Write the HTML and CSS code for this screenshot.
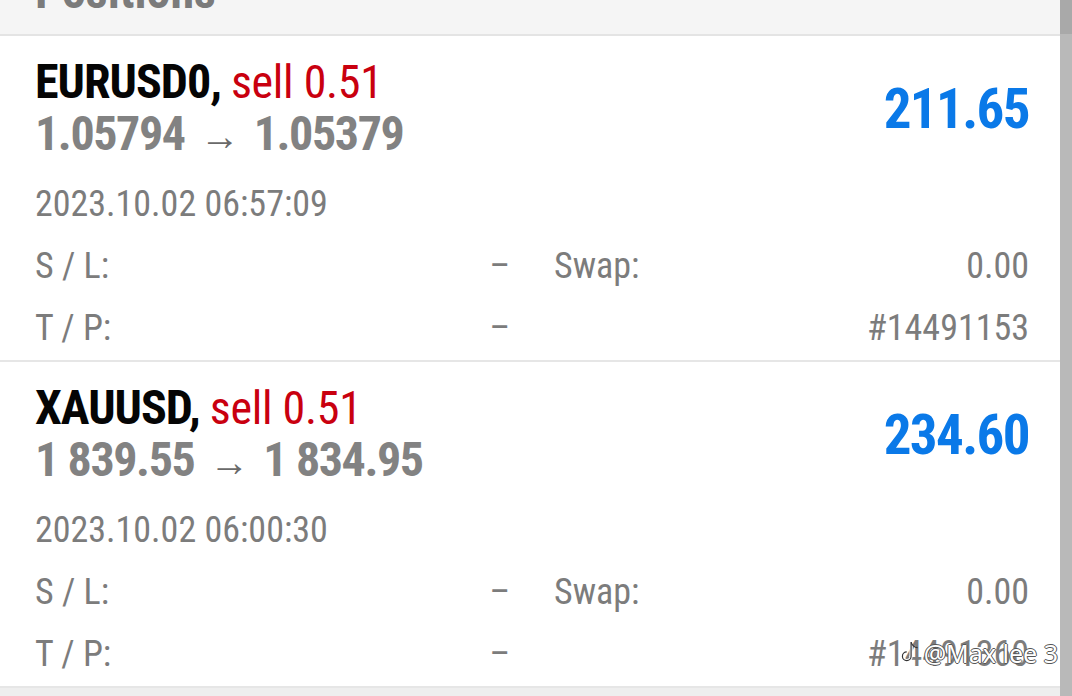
FILE: index.html
```html
<!DOCTYPE html>
<html lang="en">
<head>
<meta charset="utf-8">
<title>Positions</title>
<link rel="stylesheet" href="styles.css">
</head>
<body>
<div class="app">
  <main class="list">
    <header class="title-bar"><span class="title">Positions</span></header>

    <section class="pos">
      <div class="pos-top">
        <div class="pos-main">
          <div class="line symbol"><b>EURUSD0,</b><span class="sell">sell 0.51</span></div>
          <div class="line prices">1.05794<span class="arrow">→</span>1.05379</div>
        </div>
        <div class="profit">211.65</div>
      </div>
      <div class="date">2023.10.02 06:57:09</div>
      <div class="details">
        <div class="cell"><span>S / L:</span><span>–</span></div>
        <div class="cell"><span>Swap:</span><span>0.00</span></div>
        <div class="cell"><span>T / P:</span><span>–</span></div>
        <div class="cell"><span></span><span>#14491153</span></div>
      </div>
    </section>

    <section class="pos">
      <div class="pos-top">
        <div class="pos-main">
          <div class="line symbol"><b>XAUUSD,</b><span class="sell">sell 0.51</span></div>
          <div class="line prices">1 839.55<span class="arrow">→</span>1 834.95</div>
        </div>
        <div class="profit">234.60</div>
      </div>
      <div class="date">2023.10.02 06:00:30</div>
      <div class="details">
        <div class="cell"><span>S / L:</span><span>–</span></div>
        <div class="cell"><span>Swap:</span><span>0.00</span></div>
        <div class="cell"><span>T / P:</span><span>–</span></div>
        <div class="cell ticket"><span></span><span>#14491360</span>
          <div class="watermark">
            <svg class="wm-icon" viewBox="0 0 20 24" width="22" height="26"><path d="M11 2v13a4 4 0 1 1-4-4" fill="none" stroke="#fff" stroke-width="3"/><path d="M11 2v13a4 4 0 1 1-4-4" fill="none" stroke="#333" stroke-width="1.1"/><path d="M11 2c1 3 3 5 6 5" fill="none" stroke="#333" stroke-width="1.1"/></svg>
            <span>@Max lee 3</span>
          </div>
        </div>
      </div>
    </section>
    <div class="rest"></div>
  </main>
  <aside class="scrollbar"><div class="thumb-top"></div></aside>
</div>
</body>
</html>
```

FILE: styles.css
```css
html, body {
  margin: 0;
  padding: 0;
  background: #ffffff;
}

body {
  font-family: "Roboto Condensed", Roboto, "Liberation Sans", sans-serif;
  font-stretch: 87.5%;
  width: 1072px;
  height: 696px;
  overflow: hidden;
}

.app {
  display: flex;
  height: 696px;
}

.list {
  flex: 1;
  display: flex;
  flex-direction: column;
  min-width: 0;
}

.title-bar {
  height: 36px;
  flex: none;
  background: #f5f5f5;
  border-bottom: 2px solid #e4e4e4;
  display: flex;
  align-items: flex-end;
  padding: 0 0 18px 35px;
  box-sizing: border-box;
  overflow: hidden;
}

.title {
  font-size: 48px;
  line-height: 48px;
  font-weight: 700;
  color: #7b7b7b;
}

.pos {
  flex: none;
  height: 326px;
  box-sizing: border-box;
  padding: 20px 31px 0 35px;
  border-bottom: 2px solid #e6e6e6;
}

.pos-top {
  display: flex;
  align-items: center;
  justify-content: space-between;
}

.line {
  font-size: 48px;
  line-height: 52px;
  white-space: nowrap;
}

.symbol b {
  font-weight: 700;
  color: #050505;
  letter-spacing: -1px;
}

.sell {
  color: #c9000f;
  font-weight: 400;
  font-size: 46px;
  margin-left: 10px;
  letter-spacing: -0.3px;
}

.prices {
  color: #828282;
  font-weight: 700;
  letter-spacing: -1.4px;
}

.arrow {
  font-weight: 400;
  font-size: 40px;
  color: #6a6a6a;
  margin: 0 14px 0 15px;
  letter-spacing: 0;
}

.profit {
  font-size: 55px;
  line-height: 60px;
  font-weight: 700;
  color: #0a79e8;
  letter-spacing: -1.6px;
  margin-top: -2px;
}

.date {
  margin-top: 10px;
  font-size: 36px;
  line-height: 62px;
  color: #7c7c7c;
}

.details {
  display: grid;
  grid-template-columns: 1fr 1fr;
  column-gap: 44px;
  font-size: 36px;
  line-height: 62px;
  color: #7c7c7c;
}

.cell {
  display: flex;
  justify-content: space-between;
  white-space: nowrap;
}

.ticket {
  position: relative;
}

.watermark {
  position: absolute;
  right: -29px;
  top: 15px;
  display: flex;
  align-items: center;
  gap: 3px;
  font-family: "Noto Sans", sans-serif;
  font-stretch: 100%;
  font-size: 25px;
  line-height: 30px;
  color: #ffffff;
  text-shadow: 1px 0 0 #555, -1px 0 0 #555, 0 1px 0 #555, 0 -1px 0 #555;
}

.rest {
  flex: 1;
  background: #eeeeee;
}

.scrollbar {
  width: 12px;
  flex: none;
  background: #b9b9b9;
}

.thumb-top {
  height: 34px;
  background: #a9a9a9;
}
```
